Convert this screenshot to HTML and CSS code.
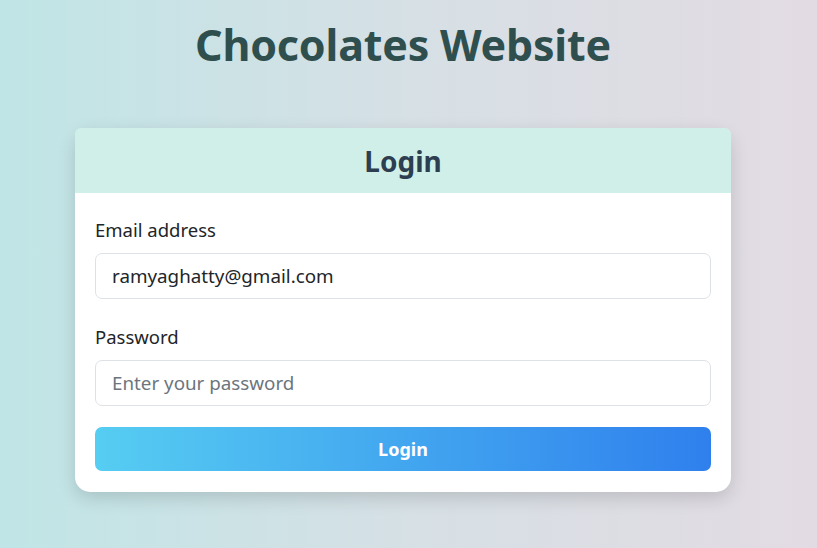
FILE: index.html
```html
<!DOCTYPE html>
<html lang="en">
<head>
<meta charset="utf-8">
<title>Chocolates Website</title>
<link rel="stylesheet" href="styles.css">
</head>
<body>
<main class="page">
  <h1 class="site-title">Chocolates Website</h1>
  <section class="card">
    <header class="card-header">
      <h2 class="card-title">Login</h2>
    </header>
    <form class="card-body">
      <div class="field">
        <label class="field-label" for="email">Email address</label>
        <input class="field-input" id="email" type="email" value="ramyaghatty@gmail.com">
      </div>
      <div class="field">
        <label class="field-label" for="password">Password</label>
        <input class="field-input" id="password" type="password" placeholder="Enter your password">
      </div>
      <button class="login-btn" type="button">Login</button>
    </form>
  </section>
</main>
</body>
</html>
```

FILE: styles.css
```css
* { box-sizing: border-box; }
html, body { height: 100%; }
body {
  margin: 0;
  font-family: "Noto Sans", "Open Sans", sans-serif;
  background: linear-gradient(90deg, #c0e5e6 0%, #d6e0e5 50%, #e3dbe3 100%);
  color: #212529;
}
.page {
  display: flex;
  flex-direction: column;
  align-items: center;
  padding-top: 16px;
  padding-right: 11px;
}
.site-title {
  margin: 0;
  font-size: 43px;
  line-height: 58px;
  font-weight: 700;
  color: #2f4f4f;
  letter-spacing: -0.2px;
}
.card {
  margin-top: 54px;
  width: 656px;
  background: #fff;
  border-radius: 15px;
  box-shadow: 0 6px 18px rgba(0, 0, 0, 0.15);
}
.card-header {
  height: 65px;
  background: #d1efe9;
  border-radius: 6px 6px 0 0;
  display: flex;
  align-items: center;
  justify-content: center;
}
.card-title {
  margin: 0;
  font-size: 28px;
  font-weight: 700;
  color: #2c3e50;
}
.card-body {
  padding: 23px 20px 21px;
  display: flex;
  flex-direction: column;
}
.field {
  display: flex;
  flex-direction: column;
  margin-bottom: 21px;
}
.field + .field { margin-top: 3px; }
.field-label {
  font-size: 18.5px;
  line-height: 27px;
  margin-bottom: 10px;
  color: #212529;
}
.field-input {
  height: 46px;
  border: 1px solid #dee2e6;
  border-radius: 7px;
  padding: 0 16px;
  font-family: inherit;
  font-size: 18.8px;
  color: #212529;
  background: #fff;
}
.field-input::placeholder { color: #6c757d; }
.login-btn {
  height: 44px;
  border: none;
  border-radius: 7px;
  background: linear-gradient(90deg, #56cdf2 0%, #2f80ed 100%);
  color: #fff;
  font-family: inherit;
  font-size: 18px;
  font-weight: 700;
}
```
